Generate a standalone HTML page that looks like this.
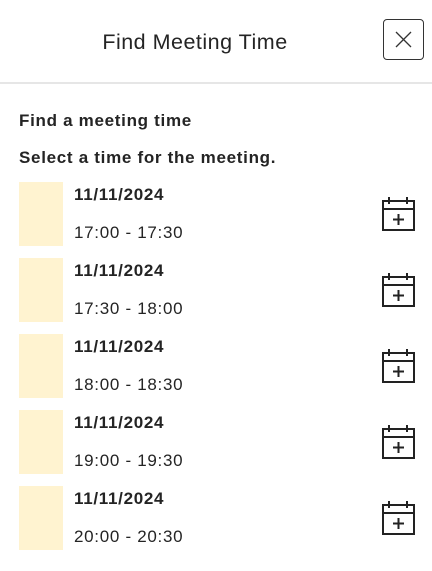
<!DOCTYPE html>
<html><head><style>
body{margin:0;width:432px;height:571px;background:#fff;font-family:"Segoe UI","Liberation Sans",sans-serif;color:#242424;position:relative;overflow:hidden}
.hdr{position:absolute;left:0;top:0;width:432px;height:82px;border-bottom:2px solid #e6e6e6}
.title{position:absolute;left:0;width:390px;top:28px;text-align:center;font-size:21.5px;line-height:28px;letter-spacing:0.5px}
.close{position:absolute;left:383px;top:19px;width:39px;height:39px;border:1px solid #333;border-radius:4px}
.t{position:absolute;left:19px;font-size:17px;font-weight:bold;letter-spacing:0.7px}
.row{position:absolute;left:0;width:432px;height:64px}
.blk{position:absolute;left:19px;top:0;width:44px;height:64px;background:#fff3d0}
.d{position:absolute;left:74px;top:3px;font-size:17px;font-weight:bold;letter-spacing:0.7px}
.tm{position:absolute;left:74px;top:41px;font-size:17px;letter-spacing:0.7px}
.ic{position:absolute;left:380px;top:12px}
</style></head><body>
<div class="hdr"><div class="title">Find Meeting Time</div>
<div class="close"><svg width="39" height="39"><path d="M12 12L27 27M27 12L12 27" stroke="#333" stroke-width="1.3"/></svg></div></div>
<div class="t" style="top:111px">Find a meeting time</div>
<div class="t" style="top:148px">Select a time for the meeting.</div>
<div class="row" style="top:182px"><div class="blk"></div><div class="d">11/11/2024</div><div class="tm">17:00 - 17:30</div><svg class="ic" width="40" height="40"><g fill="none" stroke="#222" stroke-width="2"><rect x="3" y="7" width="31" height="29"/><path d="M3 15H34M9 3V10M27 3V10M18.5 20V31M13 25.5H24"/></g></svg></div>
<div class="row" style="top:258px"><div class="blk"></div><div class="d">11/11/2024</div><div class="tm">17:30 - 18:00</div><svg class="ic" width="40" height="40"><g fill="none" stroke="#222" stroke-width="2"><rect x="3" y="7" width="31" height="29"/><path d="M3 15H34M9 3V10M27 3V10M18.5 20V31M13 25.5H24"/></g></svg></div>
<div class="row" style="top:334px"><div class="blk"></div><div class="d">11/11/2024</div><div class="tm">18:00 - 18:30</div><svg class="ic" width="40" height="40"><g fill="none" stroke="#222" stroke-width="2"><rect x="3" y="7" width="31" height="29"/><path d="M3 15H34M9 3V10M27 3V10M18.5 20V31M13 25.5H24"/></g></svg></div>
<div class="row" style="top:410px"><div class="blk"></div><div class="d">11/11/2024</div><div class="tm">19:00 - 19:30</div><svg class="ic" width="40" height="40"><g fill="none" stroke="#222" stroke-width="2"><rect x="3" y="7" width="31" height="29"/><path d="M3 15H34M9 3V10M27 3V10M18.5 20V31M13 25.5H24"/></g></svg></div>
<div class="row" style="top:486px"><div class="blk"></div><div class="d">11/11/2024</div><div class="tm">20:00 - 20:30</div><svg class="ic" width="40" height="40"><g fill="none" stroke="#222" stroke-width="2"><rect x="3" y="7" width="31" height="29"/><path d="M3 15H34M9 3V10M27 3V10M18.5 20V31M13 25.5H24"/></g></svg></div>
</body></html>
